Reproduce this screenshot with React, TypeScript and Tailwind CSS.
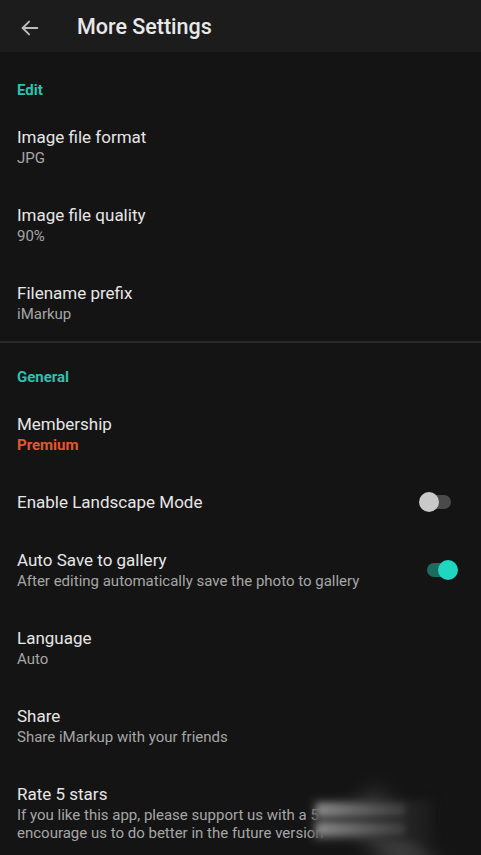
import React from "react";

interface Row {
  id: number;
  title: string;
  sub?: string;
  subClass?: string;
  toggle?: "on" | "off";
}

const editRows: Row[] = [
  { id: 1, title: "Image file format", sub: "JPG" },
  { id: 2, title: "Image file quality", sub: "90%" },
  { id: 3, title: "Filename prefix", sub: "iMarkup" },
];

const generalRows: Row[] = [
  { id: 4, title: "Membership", sub: "Premium", subClass: "text-[#e4572e] font-bold" },
  { id: 5, title: "Enable Landscape Mode", toggle: "off" },
  {
    id: 6,
    title: "Auto Save to gallery",
    sub: "After editing automatically save the photo to gallery",
    toggle: "on",
  },
  { id: 7, title: "Language", sub: "Auto" },
  { id: 8, title: "Share", sub: "Share iMarkup with your friends" },
  {
    id: 9,
    title: "Rate 5 stars",
    sub: "If you like this app, please support us with a 5 stars rating to encourage us to do better in the future version",
  },
];

const Toggle: React.FC<{ on: boolean }> = ({ on }) =>
  on ? (
    <div className="flex items-center ml-[9px] -mr-[7px]">
      <div className="w-[24px] h-[14px] rounded-full bg-[#1c6b61]" />
      <div className="relative z-10 -ml-[13px] w-[20px] h-[20px] rounded-full bg-[#1fd6c0]" />
    </div>
  ) : (
    <div className="flex items-center">
      <div className="relative z-10 w-[20px] h-[20px] rounded-full bg-[#c9c9c9]" />
      <div className="-ml-[14px] w-[26px] h-[14px] rounded-full bg-[#4a4a4a]" />
    </div>
  );

const SettingRow: React.FC<{ row: Row }> = ({ row }) => (
  <div className="flex items-center px-[17px] py-[18px]">
    <div className="flex-1 min-w-0">
      <div className="text-[17px] leading-[22px] text-[#e6e6e6]">{row.title}</div>
      {row.sub && (
        <div
          className={`text-[15px] leading-[18px] py-[1px] ${
            row.subClass ?? "text-[#a6a6a6]"
          }`}
        >
          {row.sub}
        </div>
      )}
    </div>
    {row.toggle && (
      <div className="ml-[12px] mr-[13px]">
        <Toggle on={row.toggle === "on"} />
      </div>
    )}
  </div>
);

export default function App() {
  return (
    <div
      className="relative w-[481px] h-[855px] overflow-hidden bg-[#141414]"
      style={{ fontFamily: "Roboto, 'Noto Sans', sans-serif" }}
    >
      <div className="h-[52px] pt-[3px] bg-[#1c1c1c] flex items-center">
        <svg
          className="ml-[19px]"
          width="22"
          height="22"
          viewBox="0 0 24 24"
          fill="none"
          stroke="#bdbdbd"
          strokeWidth="2"
          strokeLinecap="round"
          strokeLinejoin="round"
        >
          <path d="M20 12H4" />
          <path d="M11 5l-7 7 7 7" />
        </svg>
        <h1 className="ml-[36px] text-[21.5px] font-medium text-[#e8e8e8]">
          More Settings
        </h1>
      </div>

      <div className="px-[17px] pt-[28px] pb-[8px] text-[15px] leading-[20px] font-bold text-[#2ec2ae]">
        Edit
      </div>
      {editRows.map((r) => (
        <SettingRow key={r.id} row={r} />
      ))}

      <div className="h-[2px] bg-[#2a2a2a] -mt-[1px]" />

      <div className="px-[17px] pt-[24px] pb-[8px] text-[15px] leading-[20px] font-bold text-[#2ec2ae]">
        General
      </div>
      {generalRows.map((r) => (
        <SettingRow key={r.id} row={r} />
      ))}

      {/* light smear lying over the lower right corner */}
      <div className="absolute left-[372px] top-[790px] w-[40px] h-[100px] bg-[#3a3a3a] blur-[10px] -rotate-[38deg]" />
      <div className="absolute left-[314px] top-[800px] w-[120px] h-[40px] bg-gradient-to-r from-[#4a4a4a] via-[#333] to-[#1a1a1a] blur-[4px]" />
      <div className="absolute left-[316px] top-[804px] w-[90px] h-[12px] rounded-full bg-gradient-to-r from-[#8a8a8a] to-[#3a3a3a] blur-[3px]" />
      <div className="absolute left-[316px] top-[823px] w-[90px] h-[12px] rounded-full bg-gradient-to-r from-[#8a8a8a] to-[#3a3a3a] blur-[3px]" />
    </div>
  );
}
